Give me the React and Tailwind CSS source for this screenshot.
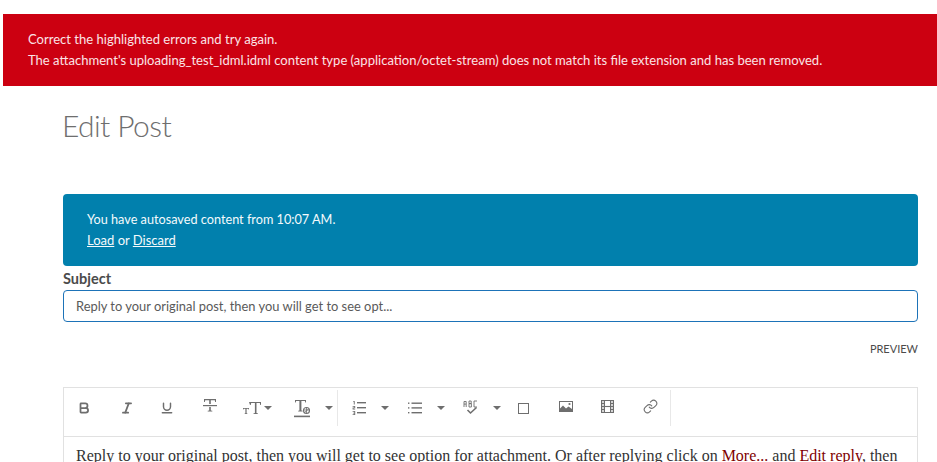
import { Bold, Italic, Underline, Link } from 'lucide-react'

function Caret() {
  return <span className="block w-0 h-0 border-x-[4px] border-x-transparent border-t-[4px] border-t-[#6e6e6e]" />
}

function Strike() {
  return (
    <svg width="18" height="16" viewBox="0 0 18 16" className="text-[#6e6e6e]" fill="currentColor">
      <path d="M3 1h12v3h-.8l-.4-1.8H9.8V6H8.2V2.2H4.2L3.8 4H3z" />
      <rect x="2" y="7" width="14" height="1.2" />
      <path d="M8.2 9h1.6v3.4l1.5.4v.8H6.7v-.8l1.5-.4z" />
    </svg>
  )
}

function FontSize() {
  return (
    <svg width="20" height="14" viewBox="0 0 20 14" className="text-[#6e6e6e]" fill="currentColor">
      <path d="M7 1h12v3h-.7l-.5-2h-3.3v10l1.5.4v.6h-4.6v-.6l1.5-.4V2H9.2l-.5 2H8z" />
      <path d="M1 7h6v1.6h-.5L6.2 7.8H4.6v4.5l.8.3v.4H2.6v-.4l.8-.3V7.8H1.8l-.3.8H1z" />
    </svg>
  )
}

function TextColor() {
  return (
    <svg width="18" height="19" viewBox="0 0 18 19" className="text-[#6e6e6e]" fill="currentColor">
      <path d="M1 1h11v2.6h-.7l-.4-1.6H7.4v9.4l1.2.4v.7H4.2v-.7l1.2-.4V2H2.1l-.4 1.6H1z" />
      <circle cx="12.5" cy="11.5" r="3" fill="none" stroke="currentColor" strokeWidth="1.1" />
      <path d="M9.5 11h6M12.5 8.5v6M10 14l5-4.5" stroke="currentColor" strokeWidth="0.8" />
      <rect x="0" y="16.6" width="16" height="1.6" />
    </svg>
  )
}

function NumberList() {
  return (
    <svg width="14" height="14" viewBox="0 0 14 14" className="text-[#6e6e6e]" fill="currentColor">
      <rect x="5" y="1" width="9" height="1.4" />
      <rect x="5" y="6" width="9" height="1.4" />
      <rect x="5" y="11" width="9" height="1.4" />
      <path d="M1.5 0h1.2v3.6H1.8V1H1.2zM.6 5h2.6v2.2H1.5v.6h1.7v.7H.6V6.6h1.7V5.7H.6zM.6 10h2.6v4H.6v-.7h1.7v-.9H1.2v-.6h1.1v-1.1H.6z" />
    </svg>
  )
}

function BulletList() {
  return (
    <svg width="14" height="12" viewBox="0 0 14 12" className="text-[#6e6e6e]" fill="currentColor">
      <rect x="3.5" y="0.5" width="10.5" height="1.4" />
      <rect x="3.5" y="5.2" width="10.5" height="1.4" />
      <rect x="3.5" y="10" width="10.5" height="1.4" />
      <rect x="0" y="0.5" width="1.4" height="1.4" />
      <rect x="0" y="5.2" width="1.4" height="1.4" />
      <rect x="0" y="10" width="1.4" height="1.4" />
    </svg>
  )
}

function SpellCheck() {
  return (
    <svg width="16" height="15" viewBox="0 0 16 15" className="text-[#6e6e6e]" fill="none" stroke="currentColor">
      <path d="M1 7V1.5h2.2v2.6H1M3.2 4.1V7M6 1h2.2v2.6H6zM6 3.6h2.4V7H6zM14 1h-3v6h3" strokeWidth="0.9" />
      <path d="M4.5 10l3 3 6-5.5" strokeWidth="1.6" />
    </svg>
  )
}

function ImageIcon() {
  return (
    <svg width="14" height="12" viewBox="0 0 14 12" className="text-[#6e6e6e]" fill="currentColor">
      <path d="M0 0h14v11H0zM1 1v6.5l3-3 3 3 2.5-2L13 8V1z" fillRule="evenodd" />
      <circle cx="10.5" cy="3" r="1.1" />
    </svg>
  )
}

function FilmIcon() {
  return (
    <svg width="13" height="13" viewBox="0 0 13 13" className="text-[#6e6e6e]" fill="none" stroke="currentColor" strokeWidth="1">
      <rect x="0.5" y="0.5" width="12" height="12" fill="#d4d4d4" />
      <rect x="3.5" y="1" width="6" height="4.8" fill="#fff" stroke="none" />
      <rect x="3.5" y="7.2" width="6" height="4.8" fill="#fff" stroke="none" />
      <path d="M3.5 0.5v12M9.5 0.5v12M0.5 6.5h12M0.5 3.5h3M9.5 3.5h3M0.5 9.5h3M9.5 9.5h3" />
    </svg>
  )
}

function App() {
  return (
    <div className="h-[462px] overflow-hidden bg-white font-['Lato','Noto_Sans',sans-serif] pt-[14px] text-[#4b4b4b]">
      {/* Error banner */}
      <div className="ml-[3px] h-[72px] bg-[#cc0011] pl-[25px] pt-[15px] text-[13.06px] leading-[21px] text-[#fbe3e6]">
        <p>Correct the highlighted errors and try again.</p>
        <p>The attachment's uploading_test_idml.idml content type (application/octet-stream) does not match its file extension and has been removed.</p>
      </div>

      <div className="ml-[63px] w-[855px]">
        <h1 className="-ml-px mt-[17px] h-[44px] text-[30px] leading-[44px] font-light tracking-[-0.6px] text-[#6e6e6e]">Edit Post</h1>

        {/* Autosave notice */}
        <div className="mt-[47px] h-[72px] rounded-[4px] bg-[#0180ad] pl-[24px] pt-[15px] text-[13px] leading-[21px] text-[#f4fafc]">
          <p className="text-[12.7px]">You have autosaved content from 10:07 AM.</p>
          <p>
            <a className="underline">Load</a> or <a className="underline">Discard</a>
          </p>
        </div>

        <label className="mt-[3px] block h-[18px] text-[14.5px] leading-[20px] font-bold text-[#4b4b4b]">Subject</label>
        <div className="mt-[3px] flex h-[32px] items-center rounded-[4px] border border-[#1d73b8] pl-[12px] pt-[2px] text-[12.9px] text-[#5a5a5a]">
          Reply to your original post, then you will get to see opt...
        </div>

        <div className="mt-[20px] h-[14px] text-right text-[11px] leading-[14px] text-[#4b4b4b]">PREVIEW</div>

        {/* Editor */}
        <div className="mt-[31px] border border-[#e1e1e1]">
          <div className="flex h-[49px] items-start border-b border-[#e1e1e1]">
            <div className="mt-[2px] flex h-[36px] w-[274px] items-center border-r border-[#e8e8e8]">
              <Bold size={14} strokeWidth={3} className="ml-[13px] text-[#6e6e6e]" />
              <Italic size={14} strokeWidth={3} className="ml-[29px] text-[#6e6e6e]" />
              <Underline size={14} strokeWidth={2.5} className="ml-[26px] text-[#6e6e6e]" />
              <span className="ml-[27px] mb-[4px]"><Strike /></span>
              <span className="ml-[23px]"><FontSize /></span>
              <span className="ml-[2px]"><Caret /></span>
              <span className="ml-[22px]"><TextColor /></span>
              <span className="ml-[13px]"><Caret /></span>
            </div>
            <div className="mt-[2px] flex h-[36px] w-[333px] items-center border-r border-[#e8e8e8]">
              <span className="ml-[14px]"><NumberList /></span>
              <span className="ml-[15px]"><Caret /></span>
              <span className="ml-[19px]"><BulletList /></span>
              <span className="ml-[15px]"><Caret /></span>
              <span className="ml-[18px] mb-[1px]"><SpellCheck /></span>
              <span className="ml-[14px]"><Caret /></span>
              <span className="ml-[17px] mt-[1px] h-[11px] w-[11px] border-[1.5px] border-[#6e6e6e]" />
              <span className="ml-[30px] mb-[3px]"><ImageIcon /></span>
              <span className="ml-[28px] mb-[3px]"><FilmIcon /></span>
              <span className="ml-[29px] mb-[3px]"><Link size={15} strokeWidth={1.7} className="text-[#6e6e6e]" /></span>
            </div>
          </div>
          <div className="px-[12px] pt-[8px] font-['Liberation_Serif',serif] text-[16px] leading-[22px] whitespace-nowrap text-[#333]">
            Reply to your original post, then you will get to see option for attachment. Or after replying click on <a className="text-[#800000]">More...</a> and <a className="text-[#800000]">Edit reply</a>, then
          </div>
        </div>
      </div>
    </div>
  )
}

export default App
